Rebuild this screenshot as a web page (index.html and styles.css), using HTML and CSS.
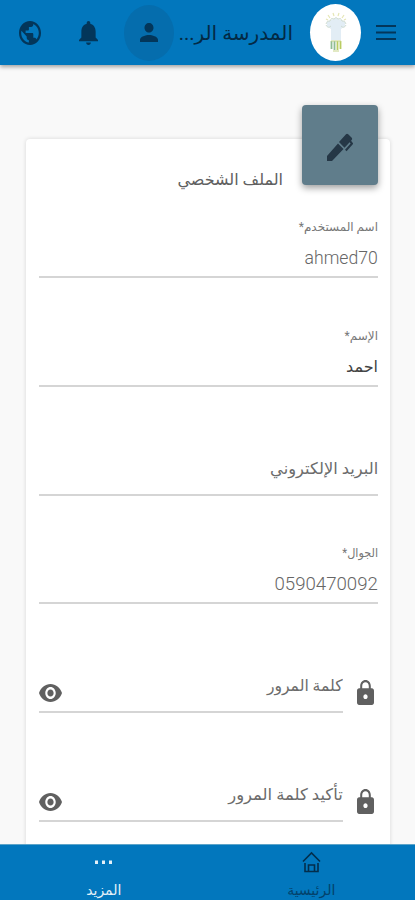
FILE: index.html
```html
<!DOCTYPE html>
<html lang="ar" dir="rtl">
<head>
<meta charset="utf-8">
<meta name="viewport" content="width=device-width, initial-scale=1">
<title>الملف الشخصي</title>
<link rel="stylesheet" href="styles.css">
</head>
<body>
<header class="topbar">
  <svg class="menu" viewBox="0 0 20 15" preserveAspectRatio="none"><path d="M0 1h20M0 7.500h20M0 14h20" stroke="#03365a" stroke-width="2"/></svg>
  <div class="logo">
    <svg viewBox="0 0 24 44" preserveAspectRatio="none">
      <path d="M7 29V18L3 15V11l4-2 5-2 5 2 4 2v4l-4 3v11z" fill="#e2edf5"/>
      <path d="M2 14q2 4 5 1M22 14q-2 4-5 1M2 13q1-4 4-3 1-4 4-2 2-3 4 0 3-2 4 2 3-1 4 3" fill="none" stroke="#cfdcd2" stroke-width="1"/>
      <path d="M4 4l2 3M9 2l1 3M15 2l-1 3M20 4l-2 3M2 8l2 1M22 8l-2 1" stroke="#e5e6b5" stroke-width="1.200"/>
      <path d="M7.500 30v8M10.500 30v9" stroke="#8fbc94" stroke-width="1.800"/>
      <path d="M13.500 30v9M16.500 30v8" stroke="#b9cc62" stroke-width="1.800"/>
      <path d="M9 40h6M7 30h10" stroke="#c6d489" stroke-width="1.200"/>
    </svg>
  </div>
  <div class="brand"><span class="text">المدرسة الر...</span></div>
  <div class="avatar"><svg viewBox="4 4 16 16" preserveAspectRatio="none"><path d="M12 12c2.210 0 4-1.790 4-4s-1.790-4-4-4-4 1.790-4 4 1.790 4 4 4zm0 2c-2.670 0-8 1.340-8 4v2h16v-2c0-2.660-5.330-4-8-4z"/></svg></div>
  <svg class="bell" viewBox="4 2.500 16 19.500" preserveAspectRatio="none"><path d="M12 22c1.100 0 2-.9 2-2h-4c0 1.100.89 2 2 2zm6-6v-5c0-3.070-1.640-5.640-4.500-6.320V4c0-.83-.67-1.500-1.500-1.500s-1.500.67-1.500 1.500v.68C7.630 5.360 6 7.920 6 11v5l-2 2v1h16v-1l-2-2z"/></svg>
  <svg class="globe" viewBox="2 2 20 20" preserveAspectRatio="none"><path d="M12 2C6.480 2 2 6.480 2 12s4.480 10 10 10 10-4.480 10-10S17.520 2 12 2zm-1 17.930c-3.950-.49-7-3.850-7-7.930 0-.62.080-1.210.21-1.790L9 15v1c0 1.100.9 2 2 2v1.930zm6.900-2.540c-.26-.81-1-1.390-1.900-1.390h-1v-3c0-.55-.45-1-1-1H8v-2h2c.55 0 1-.45 1-1V7h2c1.100 0 2-.9 2-2v-.41c2.930 1.190 5 4.060 5 7.410 0 2.080-.8 3.970-2.100 5.390z"/></svg>
</header>

<main class="content">
  <section class="card">
    <div class="card-head">
      <div class="tile"><svg viewBox="0 0 26 28" preserveAspectRatio="none"><path d="M0 23 11 10.500l5.500 5.500L5 28H0zM12 9 19 1.200q1-1 2.200 0L25 5q.5 1.200-.5 2.200L17.500 14.700z"/><path d="M22.500 7.500 25 10.500 18.800 17.500" fill="none" stroke="#253746" stroke-width="2"/></svg></div>
      <h1><span class="text">الملف الشخصي</span></h1>
    </div>
    <div class="field first"><label><span class="text">اسم المستخدم*</span></label><div class="value latin"><span class="text w-login">ahmed70</span></div></div>
    <div class="field"><label><span class="text">الإسم*</span></label><div class="value"><span class="text">احمد</span></div></div>
    <div class="field"><div class="placeholder"><span class="text w-mail">البريد الإلكتروني</span></div></div>
    <div class="field"><label><span class="text w-mobile">الجوال*</span></label><div class="value latin"><span class="text w-phone">0590470092</span></div></div>
    <div class="secure">
      <svg class="lock" viewBox="4 1 16 21" preserveAspectRatio="none"><path d="M18 8h-1V6c0-2.760-2.240-5-5-5S7 3.240 7 6v2H6c-1.100 0-2 .9-2 2v10c0 1.100.9 2 2 2h12c1.100 0 2-.9 2-2V10c0-1.100-.9-2-2-2zm-6 9c-1.100 0-2-.9-2-2s.9-2 2-2 2 .9 2 2-.9 2-2 2zm3.100-9H8.900V6c0-1.710 1.390-3.100 3.100-3.100s3.100 1.390 3.100 3.100v2z"/></svg>
      <div class="field"><div class="placeholder"><span class="text w-pass">كلمة المرور</span><svg class="eye" viewBox="1 4.500 22 15" preserveAspectRatio="none"><path d="M12 4.500C7 4.500 2.730 7.610 1 12c1.730 4.390 6 7.500 11 7.500s9.270-3.110 11-7.500c-1.730-4.390-6-7.500-11-7.500zM12 17c-2.760 0-5-2.240-5-5s2.240-5 5-5 5 2.240 5 5-2.240 5-5 5zm0-8c-1.660 0-3 1.340-3 3s1.340 3 3 3 3-1.340 3-3-1.340-3-3-3z"/></svg></div></div>
    </div>
    <div class="secure">
      <svg class="lock" viewBox="4 1 16 21" preserveAspectRatio="none"><path d="M18 8h-1V6c0-2.760-2.240-5-5-5S7 3.240 7 6v2H6c-1.100 0-2 .9-2 2v10c0 1.100.9 2 2 2h12c1.100 0 2-.9 2-2V10c0-1.100-.9-2-2-2zm-6 9c-1.100 0-2-.9-2-2s.9-2 2-2 2 .9 2 2-.9 2-2 2zm3.100-9H8.900V6c0-1.710 1.390-3.100 3.100-3.100s3.100 1.390 3.100 3.100v2z"/></svg>
      <div class="field"><div class="placeholder"><span class="text w-confirm">تأكيد كلمة المرور</span><svg class="eye" viewBox="1 4.500 22 15" preserveAspectRatio="none"><path d="M12 4.500C7 4.500 2.730 7.610 1 12c1.730 4.390 6 7.500 11 7.500s9.270-3.110 11-7.500c-1.730-4.390-6-7.500-11-7.500zM12 17c-2.760 0-5-2.240-5-5s2.240-5 5-5 5 2.240 5 5-2.240 5-5 5zm0-8c-1.660 0-3 1.340-3 3s1.340 3 3 3 3-1.340 3-3-1.340-3-3-3z"/></svg></div></div>
    </div>
  </section>
</main>

<nav class="tabs">
  <div class="tab"><svg class="home" viewBox="0 0 19 22" preserveAspectRatio="none"><path d="M1 10.500 9.500 2 18 10.500M3 12v8.500h13V12M6.500 20v-6h6v6" fill="none" stroke="#032e4c" stroke-width="1.600"/></svg><span class="text">الرئيسية</span></div>
  <div class="tab active"><svg class="dots" viewBox="0 0 18 22"><path d="M0 9.500h3V13H0zM7 9.500h3V13H7zM14 9.500h3V13h-3z"/></svg><span class="text">المزيد</span></div>
</nav>
</body>
</html>
```
FILE: styles.css
```css
* { box-sizing: border-box; }
body {
  margin: 0;
  height: 900px;
  overflow: hidden;
  display: flex;
  flex-direction: column;
  background: #f9f9f9;
  font-family: Roboto, "DejaVu Sans", sans-serif;
  color: #666;
}
svg { display: block; flex: none; }
.text { display: inline-block; white-space: nowrap; transform-origin: right center; }
.w-login { transform: scaleX(.98); }
.w-mail { transform: scaleX(1.018); }
.w-mobile { transform: scaleX(.94); }
.w-phone { transform: scaleX(1.035); }
.w-pass { transform: scaleX(.975); }
.w-confirm { transform: scaleX(1.025); }

.topbar {
  height: 65px;
  flex: none;
  display: flex;
  align-items: center;
  padding-right: 19px;
  background: #0277bd;
  box-shadow: 0 2px 4px rgba(0, 0, 0, .35);
  z-index: 1;
  fill: #03365a;
}
.menu { width: 20px; height: 15px; }
.logo {
  width: 51px;
  height: 57px;
  margin-right: 15px;
  border-radius: 50%;
  background: #fff;
  display: flex;
  align-items: center;
  justify-content: center;
}
.logo svg { width: 24px; height: 44px; }
.brand { width: 113px; margin-right: 17px; font-size: 20px; line-height: 32px; color: #032a45; }
.avatar {
  width: 50px;
  height: 56px;
  margin-right: 6px;
  border-radius: 50%;
  background: #056dad;
  display: flex;
  align-items: center;
  justify-content: center;
}
.avatar svg { width: 18px; height: 19px; }
.bell { width: 19px; height: 24px; margin-right: 26px; }
.globe { width: 22px; height: 24px; margin-right: 38px; }

.content { flex: 1; min-height: 0; padding: 74px 25px 0 26px; overflow: hidden; }
.card {
  height: 760px;
  padding: 0 12px 0 13px;
  border-radius: 4px;
  background: #fff;
  box-shadow: 0 0 4px rgba(0, 0, 0, .14);
}
.card-head { display: flex; height: 60px; }
.tile {
  width: 76px;
  height: 80px;
  margin-top: -34px;
  border-radius: 4px;
  background: #607d8b;
  box-shadow: 0 3px 7px rgba(0, 0, 0, .38);
  display: flex;
  align-items: center;
  justify-content: center;
  fill: #253746;
}
.tile svg { width: 26px; height: 28px; margin-top: 3px; }
h1 { margin: 27px 19px 0 0; font-size: 16px; line-height: 28px; font-weight: 400; color: #606060; }

.field {
  height: 108.8px;
  display: flex;
  flex-direction: column;
  justify-content: flex-end;
  border-bottom: 2px solid #d5d5d5;
}
.field.first { height: 79px; }
label { font-size: 12px; line-height: 20px; color: #777; }
.value { height: 39px; padding-top: 6px; font-size: 16px; line-height: 29px; color: #444; }
.latin { font-size: 18px; font-weight: 300; color: #666; }
.placeholder { height: 39px; display: flex; justify-content: space-between; font-size: 16px; line-height: 28px; color: #6c6c6c; }
.secure { display: flex; gap: 13px; }
.secure .field { flex: 1; }
.lock { width: 17px; height: 25px; margin: 76px 4px 0 1px; fill: #606060; }
.eye { width: 23px; height: 18px; margin-top: 12px; fill: #606060; }

.tabs {
  height: 56px;
  flex: none;
  display: flex;
  background: #0277bd;
  border-top: 1px solid #5da4c9;
  z-index: 1;
}
.tab {
  flex: 1;
  display: flex;
  flex-direction: column;
  align-items: center;
  padding-top: 6px;
  font-size: 14px;
  line-height: 24px;
  color: #03426b;
}
.tab .text { margin-top: 5px; }
.active { color: #e4f0f8; fill: #e4f0f8; }
.home { width: 19px; height: 22px; }
.dots { width: 18px; height: 22px; }
```
